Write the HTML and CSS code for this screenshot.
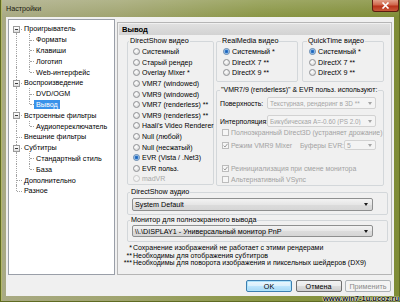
FILE: index.html
```html
<!DOCTYPE html>
<html>
<head>
<meta charset="utf-8">
<link rel="stylesheet" href="styles.css">
</head>
<body>
<div class="window">
  <div class="titlebar">
    <span class="title">Настройки</span>
    <div class="close"><svg width="9" height="7" viewBox="0 0 9 7"><path d="M1.5 0.5 L7.5 6.5 M7.5 0.5 L1.5 6.5" stroke="#fff" stroke-width="1.6"/></svg></div>
  </div>
  <div class="client">
    <div class="main">
      <div class="tree">
        <div class="row"><span class="g r first h"><span class="box"></span></span><span class="lbl">Проигрыватель</span></div>
        <div class="row"><span class="g r"></span><span class="g c h"></span><span class="lbl">Форматы</span></div>
        <div class="row"><span class="g r"></span><span class="g c h"></span><span class="lbl">Клавиши</span></div>
        <div class="row"><span class="g r"></span><span class="g c h"></span><span class="lbl">Логотип</span></div>
        <div class="row"><span class="g r"></span><span class="g c h last"></span><span class="lbl">Web-интерфейс</span></div>
        <div class="row"><span class="g r h"><span class="box"></span></span><span class="lbl">Воспроизведение</span></div>
        <div class="row"><span class="g r"></span><span class="g c h"></span><span class="lbl">DVD/OGM</span></div>
        <div class="row"><span class="g r"></span><span class="g c h last"></span><span class="lbl sel">Вывод</span></div>
        <div class="row"><span class="g r h"><span class="box"></span></span><span class="lbl">Встроенные фильтры</span></div>
        <div class="row"><span class="g r"></span><span class="g c h last"></span><span class="lbl">Аудиопереключатель</span></div>
        <div class="row"><span class="g r h"></span><span class="lbl">Внешние фильтры</span></div>
        <div class="row"><span class="g r h"><span class="box"></span></span><span class="lbl">Субтитры</span></div>
        <div class="row"><span class="g r"></span><span class="g c h"></span><span class="lbl">Стандартный стиль</span></div>
        <div class="row"><span class="g r"></span><span class="g c h last"></span><span class="lbl">База</span></div>
        <div class="row"><span class="g r h"></span><span class="lbl">Дополнительно</span></div>
        <div class="row"><span class="g r h last"></span><span class="lbl">Разное</span></div>
      </div>
      <div class="panel">
        <div class="header">Вывод</div>
        <div class="content">
          <div class="top">
            <fieldset class="grp ds">
              <legend>DirectShow видео</legend>
              <div class="opt"><span class="radio"></span>Системный</div>
              <div class="opt"><span class="radio"></span>Старый рендер</div>
              <div class="opt"><span class="radio"></span>Overlay Mixer *</div>
              <div class="opt"><span class="radio"></span>VMR7 (windowed)</div>
              <div class="opt"><span class="radio"></span>VMR9 (windowed)</div>
              <div class="opt"><span class="radio"></span>VMR7 (renderless) **</div>
              <div class="opt"><span class="radio"></span>VMR9 (renderless) **</div>
              <div class="opt"><span class="radio"></span>Haali's Video Renderer</div>
              <div class="opt"><span class="radio"></span>Null (любой)</div>
              <div class="opt"><span class="radio"></span>Null (несжатый)</div>
              <div class="opt"><span class="radio on"></span>EVR (Vista / .Net3)</div>
              <div class="opt"><span class="radio"></span>EVR польз.</div>
              <div class="opt dis"><span class="radio dis"></span>madVR</div>
            </fieldset>
            <div class="rightcol">
              <div class="pair">
                <fieldset class="grp small">
                  <legend>RealMedia видео</legend>
                  <div class="opt"><span class="radio on"></span>Системный *</div>
                  <div class="opt"><span class="radio"></span>DirectX 7 **</div>
                  <div class="opt"><span class="radio"></span>DirectX 9 **</div>
                </fieldset>
                <fieldset class="grp small">
                  <legend>QuickTime видео</legend>
                  <div class="opt"><span class="radio on"></span>Системный *</div>
                  <div class="opt"><span class="radio"></span>DirectX 7 **</div>
                  <div class="opt"><span class="radio"></span>DirectX 9 **</div>
                </fieldset>
              </div>
              <fieldset class="grp vmr">
                <legend>"VMR7/9 (renderless)" &amp; EVR польз. используют:</legend>
                <div class="vrow"><span class="vlabel">Поверхность:</span><span class="combo dis w109"><span class="ctext">Текстурная, рендеринг в 3D **</span><span class="arrow"></span></span></div>
                <div class="vrow r2"><span class="vlabel">Интерполяция:</span><span class="combo dis w109"><span class="ctext">Бикубическая A=-0.60 (PS 2.0)</span><span class="arrow"></span></span></div>
                <div class="crow"><span class="chk"></span>Полноэкранный Direct3D (устраняет дрожание)</div>
                <div class="crow r4"><span class="mixer"><span class="chk"><svg width="5" height="5" viewBox="0 0 5 5"><path d="M0.6 2.6 L2 4 L4.5 0.8" fill="none" stroke="#9a9a9a" stroke-width="1"/></svg></span>Режим VMR9 Mixer</span><span class="buf">Буферы EVR:</span><span class="combo dis w32"><span class="ctext">5</span><span class="arrow"></span></span></div>
                <div class="crow r5"><span class="chk"><svg width="5" height="5" viewBox="0 0 5 5"><path d="M0.6 2.6 L2 4 L4.5 0.8" fill="none" stroke="#9a9a9a" stroke-width="1"/></svg></span>Реинициализация при смене монитора</div>
                <div class="crow r6"><span class="chk"></span>Альтернативный VSync</div>
              </fieldset>
            </div>
          </div>
          <fieldset class="grp wide audio">
            <legend>DirectShow аудио</legend>
            <div class="combo drop"><span class="ctext">System Default</span><span class="arrow"></span></div>
          </fieldset>
          <fieldset class="grp wide monitor">
            <legend>Монитор для полноэкранного вывода</legend>
            <div class="combo drop"><span class="ctext">\\.\DISPLAY1 - Универсальный монитор PnP</span><span class="arrow"></span></div>
          </fieldset>
          <div class="notes">
            <span class="star">*</span><span>Сохранение изображений не работает с этими рендерами</span>
            <span class="star">**</span><span>Необходимы для отображения субтитров</span>
            <span class="star">***</span><span>Необходимы для поворота изображения и пиксельных шейдеров (DX9)</span>
          </div>
        </div>
      </div>
    </div>
    <div class="buttons">
      <button class="btn default">OK</button>
      <button class="btn">Отмена</button>
      <button class="btn disabled">Применить</button>
    </div>
  </div>
  <div class="watermark">www.win7-1u.ucoz.ru</div>
</div>
</body>
</html>
```
FILE: styles.css
```css
* { box-sizing: border-box; }
html, body { margin: 0; padding: 0; }
body {
  width: 400px; height: 302px; overflow: hidden;
  font-family: "Liberation Sans", Arial, sans-serif;
  font-size: 7.2px; color: #000;
}
.window {
  position: relative;
  width: 400px; height: 302px;
  display: flex; flex-direction: column;
  padding: 0 6px 6px 6px;
  background:
    linear-gradient(to bottom, rgba(255,255,255,0.18), rgba(255,255,255,0) 17px),
    linear-gradient(to right, #a9aa84 0%, #a0a46f 30%, #8a9645 65%, #7f8c36 100%);
  box-shadow: inset 1px 0 0 #5f6b22, inset -1px 0 0 #5f6b22, inset 0 -1px 0 #5f6b22, inset 2px 0 0 #b3b86a;
}
.titlebar {
  height: 17px; flex: none;
  display: flex; align-items: flex-start;
}
.title { margin-top: 4px; font-size: 7.2px; color: #1a1a10; line-height: 9px; }
.close {
  margin-left: auto; margin-right: -5px;
  width: 27px; height: 12px;
  border: 1px solid #5e1d10; border-top: none;
  border-radius: 0 0 3px 3px;
  background: linear-gradient(to bottom, #e2a089 0%, #d0654b 45%, #b8321a 55%, #c8583a 100%);
  display: flex; align-items: center; justify-content: center;
}
.close svg { display: block; }
.client {
  flex: 1;
  background: #f0f0f0;
  padding: 2px 2px 0 2px;
  display: flex; flex-direction: column;
}
.main { display: flex; height: 256px; gap: 2px; flex: none; }
.tree {
  width: 107px; height: 256px;
  background: #fff; border: 1px solid #9a9fa8;
  padding-top: 3.5px;
}
.row { display: flex; height: 10.8px; align-items: center; }
.g { position: relative; flex: none; align-self: stretch; }
.g.r { width: 13px; }
.g.c { width: 12px; }
.g::before {
  content: ""; position: absolute; left: 7px; top: 0; bottom: 0;
  border-left: 1px dotted #a3a3a3;
}
.g.first::before { top: 50%; }
.g.last::before { bottom: 50%; }
.g.h::after {
  content: ""; position: absolute; left: 8px; right: 0; top: 50%;
  border-top: 1px dotted #a3a3a3;
}
.box {
  position: absolute; left: 4px; top: 50%; margin-top: -3px;
  width: 7px; height: 7px; z-index: 1;
  border: 1px solid #9a9a9a;
  background: linear-gradient(#fff, #dedede);
}
.box::after {
  content: ""; position: absolute; left: 1px; right: 1px; top: 2px; height: 1px; background: #3a3a3a;
}
.lbl { padding: 0 2px; line-height: 9px; white-space: nowrap; }
.lbl.sel { background: #3a92ea; color: #fff; }

.panel {
  flex: 1; margin-top: 3px; height: 253px;
  border: 1px solid #b5b5b5;
  padding: 1px;
  display: flex; flex-direction: column;
}
.header {
  height: 11px; flex: none;
  background: linear-gradient(#e0e0e0, #d2d2d2);
  font-weight: bold; font-size: 7.6px;
  padding-left: 3px; line-height: 11px;
}
.content { padding: 2px 6px 0 8px; display: flex; flex-direction: column; }
.top { display: flex; align-items: flex-start; }
.grp {
  margin: 0; min-width: 0;
  border: 1px solid #d3d7da; border-radius: 2px;
}
.grp legend { padding: 0 1px; line-height: 8px; font-size: 7.2px; white-space: nowrap; }
.ds { width: 87px; padding: 1.5px 2px 0 5px; }
.ds legend { margin-left: -4px; }
.ds .opt { font-size: 7px; }
.opt { display: flex; align-items: center; height: 10.6px; white-space: nowrap; }
.opt.dis { color: #a8a8a8; }
.radio {
  flex: none; width: 7px; height: 7px; border-radius: 50%;
  border: 1px solid #8f9194; margin-right: 2px;
  background: radial-gradient(circle at 40% 35%, #ffffff 0, #e4e4e4 60%, #cfcfcf 100%);
}
.radio.on {
  border-color: #5d83ad;
  background: radial-gradient(circle, #1f5fb0 0, #2f78cc 1.4px, #a9cdf0 2.2px, #eef3f8 3px);
}
.radio.dis { border-color: #c6c6c6; background: #f3f3f3; }
.rightcol { margin-left: 2px; width: 168px; display: flex; flex-direction: column; }
.pair { display: flex; gap: 4px; }
.small { width: 82px; padding: 1.5px 2px 3px 6px; }
.small legend { margin-left: -2px; }
.vmr { margin-top: 4px; padding: 3px 6px 1px 3px; }
.vmr legend { margin-left: 0; font-size: 7px; }
.vrow { display: flex; align-items: center; height: 12px; font-size: 6.9px; }
.vrow.r2 { margin-top: 6px; }
.vlabel { width: 47px; flex: none; white-space: nowrap; }
.crow { display: flex; align-items: center; height: 10px; padding-left: 2px; color: #a2a2a2; white-space: nowrap; font-size: 6.9px; }
.crow.r4 { margin-top: 3px; }
.crow.r5 { margin-top: 13px; }
.crow.r6 { margin-top: 1px; }
.mixer { display: flex; align-items: center; width: 78px; flex: none; }
.buf { width: 44px; flex: none; }
.chk {
  flex: none; width: 7px; height: 7px; margin-right: 2px;
  border: 1px solid #bcbcbc; background: #f6f6f6;
  display: flex; align-items: center; justify-content: center;
}
.chk svg { display: block; }
.combo {
  display: flex; align-items: center; overflow: hidden; white-space: nowrap;
  border: 1px solid #a6a6a6; border-radius: 2px;
}
.combo .ctext { flex: 1; overflow: hidden; padding-left: 2px; }
.combo .arrow {
  flex: none; width: 0; height: 0; margin: 0 4px 0 3px;
  border-left: 2.5px solid transparent; border-right: 2.5px solid transparent;
  border-top: 3px solid #1a1a1a;
}
.combo.dis { background: #f4f4f4; border-color: #d2d2d2; color: #a4a4a4; height: 12px; font-size: 6.4px; }
.combo.dis .ctext { padding-left: 2px; }
.combo.dis .arrow { border-top-color: #a4a4a4; margin: 0 3px 0 1px; }
.w109 { width: 109px; }
.w32 { width: 32px; height: 10px !important; font-size: 6.9px !important; }
.wide { margin-right: -4px; padding: 2px 4px 3px 4px; }
.wide legend { margin-left: -2px; }
.audio { margin-top: 2px; }
.audio .combo { height: 13px; }
.monitor { margin-top: 1px; padding-top: 1px; padding-bottom: 4px; }
.monitor .combo { height: 12px; }
.combo.drop {
  width: 241px;
  background: linear-gradient(#f3f3f3, #e6e6e6 50%, #dcdcdc 51%, #d6d6d6);
  border-color: #8e8f8f;
}
.notes {
  margin-top: 2px; margin-left: -6px;
  display: grid; grid-template-columns: 12px auto;
  line-height: 7.5px; font-size: 7px; white-space: nowrap;
}
.notes .star { text-align: right; padding-right: 1px; }

.buttons { display: flex; justify-content: flex-end; gap: 3.5px; margin-top: 5px; padding-right: 1px; }
.btn {
  width: 46px; height: 12px; padding: 0; margin: 0;
  font-family: "Liberation Sans", Arial, sans-serif; font-size: 7.2px; color: #000;
  border: 1px solid #707070; border-radius: 2px;
  background: linear-gradient(#f2f2f2, #ebebeb 50%, #dddddd 51%, #cfcfcf);
}
.btn.default {
  border-color: #3c7fb1;
  background: linear-gradient(#eaf6fd, #d9f0fc 50%, #bee6fd 51%, #a7d9f5);
  box-shadow: inset 0 0 0 1px #aee3fb;
}
.btn.disabled { color: #8a8a8a; border-color: #adb2b5; background: #f4f4f4; }
.watermark {
  position: absolute; right: 1px; bottom: -1px;
  font-size: 7.5px; font-weight: bold; color: #111;
  text-shadow: 0 0 1px #fff, 0 0 1px #fff, 0 0 2px #fff;
}
```
